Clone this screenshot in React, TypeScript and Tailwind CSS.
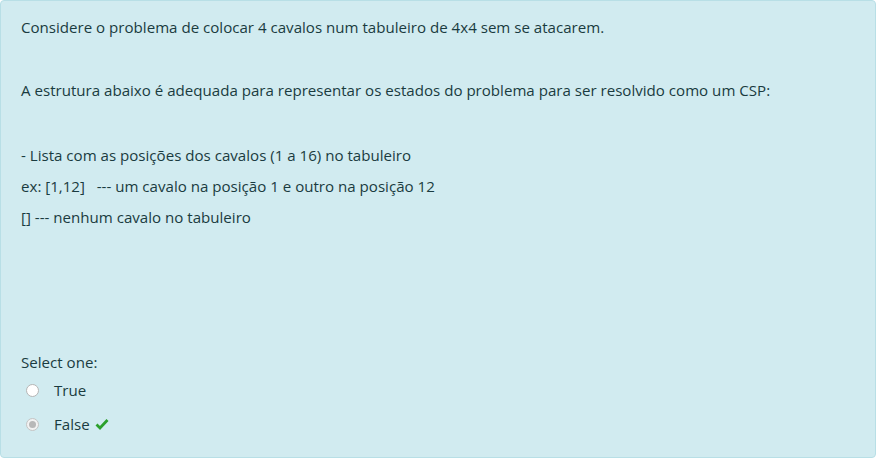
export default function App() {
  return (
    <div className="w-[876px] h-[458px] bg-white" style={{ fontFamily: '"Open Sans", "Noto Sans", sans-serif' }}>
      <div className="h-full rounded-[4px] border border-[#b8dfe6] bg-[#d1ebf0] text-[#1a3b40] text-[15.1px] px-[20px] pt-[15px] flex flex-col">
        <p className="h-[22px] leading-[22px]">Considere o problema de colocar 4 cavalos num tabuleiro de 4x4 sem se atacarem.</p>
        <div className="h-[41px]" />
        <p className="h-[22px] leading-[22px]">A estrutura abaixo é adequada para representar os estados do problema para ser resolvido como um CSP:</p>
        <div className="h-[43px]" />
        <p className="h-[31px] leading-[22px]">- Lista com as posições dos cavalos (1 a 16) no tabuleiro</p>
        <p className="h-[31px] leading-[22px] whitespace-pre">ex: [1,12]   --- um cavalo na posição 1 e outro na posição 12</p>
        <p className="h-[22px] leading-[22px]">[] --- nenhum cavalo no tabuleiro</p>
        <div className="h-[123px]" />
        <p className="h-[22px] leading-[22px]">Select one:</p>
        <div className="flex flex-col gap-[12px] mt-[6px] pl-[5px]">
          <label className="flex items-center h-[22px]">
            <span className="w-[13px] h-[13px] rounded-full border border-[#b5b5b5] bg-white" />
            <span className="ml-[15px]">True</span>
          </label>
          <label className="flex items-center h-[22px]">
            <span className="w-[13px] h-[13px] rounded-full border border-[#c4c4c4] bg-[#f2f2f2] flex items-center justify-center">
              <span className="w-[7px] h-[7px] rounded-full bg-[#b8b8b8]" />
            </span>
            <span className="ml-[15px]">False</span>
            <svg className="ml-[5px]" width="14" height="12" viewBox="0 0 14 12">
              <path d="M1.5 6.5 L5 10 L12.5 2" fill="none" stroke="#2ba02b" strokeWidth="2.8" />
            </svg>
          </label>
        </div>
      </div>
    </div>
  );
}
